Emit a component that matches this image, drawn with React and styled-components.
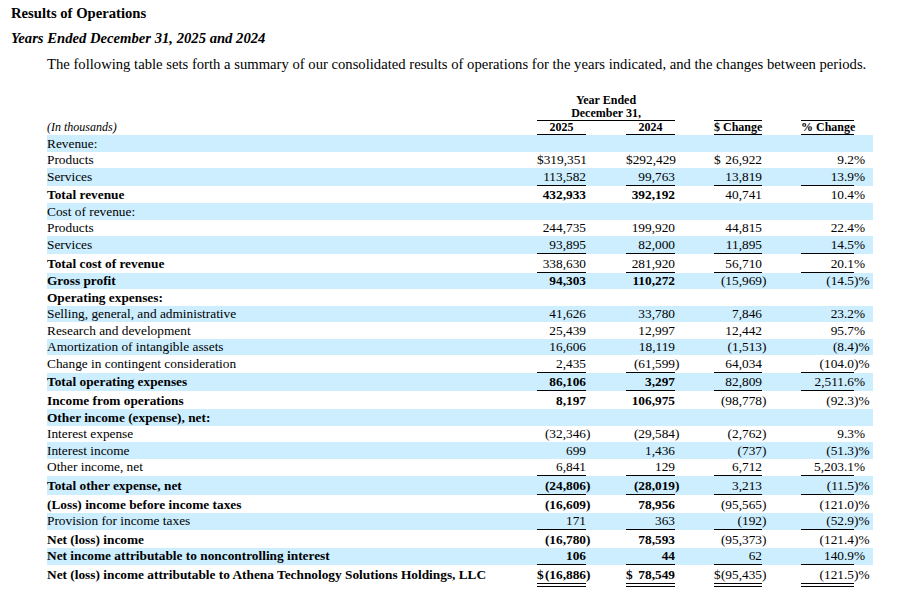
import React from 'react'
import styled, { createGlobalStyle } from 'styled-components'

const GlobalStyle = createGlobalStyle`
  body {
    margin: 0;
    background: #fff;
    color: #000;
    font-family: "Liberation Serif", "Times New Roman", serif;
  }
`;

// label | 2025 | gap | 2024 | gap | $ change | gap | % change | gap
const COLS = '490px 49px 40px 49px 39px 48px 39px 53px 19px';

const Page = styled.div`
  padding: 5px 0 0 11px;
`;

const Title = styled.div`
  font-size: 14.67px;
  font-weight: bold;
  line-height: 17px;
`;

const Subtitle = styled(Title)`
  font-style: italic;
  margin-top: 8px;
`;

const Intro = styled.p`
  margin: 9px 0 0;
  padding-left: 36px;
  font-size: 14.67px;
  line-height: 17px;
  white-space: nowrap;
`;

const Table = styled.div`
  margin: 21px 0 0 36px;
  width: 826px;
  font-size: 13.33px;
`;

const Grid = styled.div`
  display: grid;
  grid-template-columns: ${COLS};
`;

const HeadGrid = styled(Grid)`
  font-size: 12px;
  font-weight: bold;
  line-height: 13px;
`;

const YearEnded = styled.div`
  grid-column: 2 / 5;
  text-align: center;
`;

const Units = styled.div`
  align-self: end;
  font-style: italic;
  font-weight: normal;
  padding-bottom: 1px;
`;

const HeadCell = styled.div`
  border-top: 1px solid #000;
  border-bottom: ${({ $open }) => ($open ? '1px solid transparent' : '1px solid #000')};
  text-align: center;
  white-space: nowrap;
`;

const Row = styled(Grid)`
  background: ${({ $shade }) => ($shade ? '#cceeff' : '#fff')};
  padding-top: ${({ $extra }) => ($extra ? 1.25 : 0)}px;
  line-height: 15.5px;
`;

const Label = styled.div`
  padding: 0.5px 0;
  white-space: nowrap;
  font-weight: ${({ $bold }) => ($bold ? 'bold' : 'normal')};
`;

const borderFor = (rule) =>
  rule === 'double' ? '4px double #000' : rule ? '1px solid #000' : 'none';

const Value = styled.div`
  display: flex;
  justify-content: space-between;
  white-space: nowrap;
  padding: 0.5px 0;
  border-bottom: ${({ $rule }) => borderFor($rule)};
  font-weight: ${({ $bold }) => ($bold ? 'bold' : 'normal')};
`;

const Suffix = styled.div`
  padding-top: 0.5px;
  white-space: nowrap;
  font-weight: ${({ $bold }) => ($bold ? 'bold' : 'normal')};
`;

const rows = [
  { label: 'Revenue:' },
  { label: 'Products', v: ['$319,351', '$292,429', '$ 26,922', '9.2%'] },
  { label: 'Services', v: ['113,582', '99,763', '13,819', '13.9%'], rule: 1 },
  { label: 'Total revenue', bold: 1, boldNum: 1, extra: 1, v: ['432,933', '392,192', '40,741', '10.4%'] },
  { label: 'Cost of revenue:' },
  { label: 'Products', v: ['244,735', '199,920', '44,815', '22.4%'] },
  { label: 'Services', v: ['93,895', '82,000', '11,895', '14.5%'], rule: 1 },
  { label: 'Total cost of revenue', bold: 1, extra: 1, v: ['338,630', '281,920', '56,710', '20.1%'], rule: 1 },
  { label: 'Gross profit', bold: 1, boldNum: 1, v: ['94,303', '110,272', '(15,969)', '(14.5)%'] },
  { label: 'Operating expenses:', bold: 1 },
  { label: 'Selling, general, and administrative', v: ['41,626', '33,780', '7,846', '23.2%'] },
  { label: 'Research and development', v: ['25,439', '12,997', '12,442', '95.7%'] },
  { label: 'Amortization of intangible assets', v: ['16,606', '18,119', '(1,513)', '(8.4)%'] },
  { label: 'Change in contingent consideration', v: ['2,435', '(61,599)', '64,034', '(104.0)%'], rule: 1 },
  { label: 'Total operating expenses', bold: 1, boldNum: 1, extra: 1, v: ['86,106', '3,297', '82,809', '2,511.6%'], rule: 1 },
  { label: 'Income from operations', bold: 1, boldNum: 1, extra: 1, v: ['8,197', '106,975', '(98,778)', '(92.3)%'] },
  { label: 'Other income (expense), net:', bold: 1 },
  { label: 'Interest expense', v: ['(32,346)', '(29,584)', '(2,762)', '9.3%'] },
  { label: 'Interest income', v: ['699', '1,436', '(737)', '(51.3)%'] },
  { label: 'Other income, net', v: ['6,841', '129', '6,712', '5,203.1%'], rule: 1 },
  { label: 'Total other expense, net', bold: 1, boldNum: 1, extra: 1, v: ['(24,806)', '(28,019)', '3,213', '(11.5)%'], rule: 1 },
  { label: '(Loss) income before income taxes', bold: 1, boldNum: 1, extra: 1, v: ['(16,609)', '78,956', '(95,565)', '(121.0)%'] },
  { label: 'Provision for income taxes', v: ['171', '363', '(192)', '(52.9)%'], rule: 1 },
  { label: 'Net (loss) income', bold: 1, boldNum: 1, extra: 1, v: ['(16,780)', '78,593', '(95,373)', '(121.4)%'] },
  { label: 'Net income attributable to noncontrolling interest', bold: 1, boldNum: 1, v: ['106', '44', '62', '140.9%'], rule: 1 },
  { label: 'Net (loss) income attributable to Athena Technology Solutions Holdings, LLC', bold: 1, boldNum: 1, extra: 1, v: ['$(16,886)', '$ 78,549', '$(95,435)', '(121.5)%'], rule: 'double' },
];

// "$(16,886)" -> { cur: '$', num: '(16,886', tail: ')' }
const split = (s) => {
  let rest = s;
  let cur = '';
  if (rest.startsWith('$')) {
    cur = '$';
    rest = rest.slice(1).trim();
  }
  const m = rest.match(/[)%]+$/);
  const tail = m ? m[0] : '';
  const num = tail ? rest.slice(0, -tail.length) : rest;
  return { cur, num, tail };
};

const ValueCells = ({ values = ['', '', '', ''], rule, boldNum }) =>
  values.map((s, i) => {
    const { cur, num, tail } = split(s);
    const bold = boldNum && i < 2;
    return (
      <React.Fragment key={i}>
        <Value $rule={rule} $bold={bold}>
          <span>{cur}</span>
          <span>{num}</span>
        </Value>
        <Suffix $bold={bold}>{tail}</Suffix>
      </React.Fragment>
    );
  });

export default function App() {
  return (
    <>
      <GlobalStyle />
      <Page>
        <Title>Results of Operations</Title>
        <Subtitle>Years Ended December 31, 2025 and 2024</Subtitle>
        <Intro>
          The following table sets forth a summary of our consolidated results of operations for the years indicated, and the changes between periods.
        </Intro>
        <Table>
          <HeadGrid>
            <div />
            <YearEnded>
              Year Ended
              <br />
              December 31,
            </YearEnded>
          </HeadGrid>
          <HeadGrid>
            <Units>(In thousands)</Units>
            <HeadCell>2025</HeadCell>
            <HeadCell $open />
            <HeadCell>2024</HeadCell>
            <div />
            <HeadCell>$ Change</HeadCell>
            <div />
            <HeadCell>% Change</HeadCell>
            <div />
          </HeadGrid>
          {rows.map((r, i) => (
            <Row key={i} $shade={i % 2 === 0} $extra={r.extra}>
              <Label $bold={r.bold}>{r.label}</Label>
              {r.v ? <ValueCells values={r.v} rule={r.rule} boldNum={r.boldNum} /> : null}
            </Row>
          ))}
        </Table>
      </Page>
    </>
  );
}
